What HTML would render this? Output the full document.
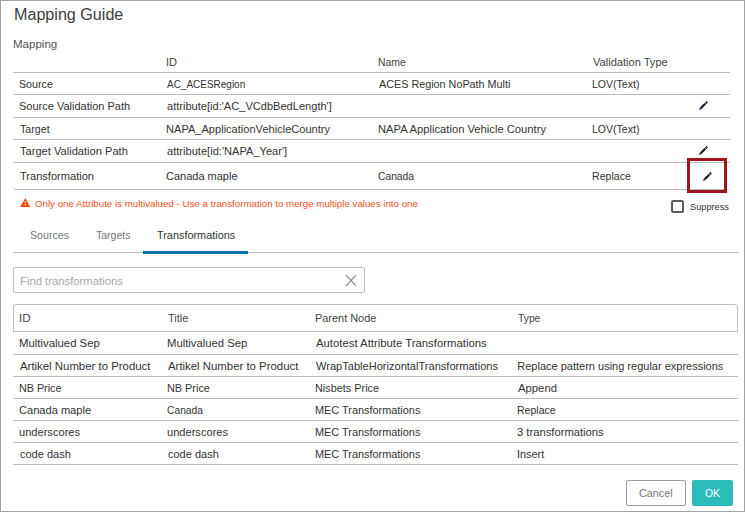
<!DOCTYPE html><html><head><meta charset="utf-8"><style>
*{margin:0;padding:0;box-sizing:border-box}
html,body{width:745px;height:512px;overflow:hidden;background:#fff}
body{position:relative;font-family:"Liberation Sans", sans-serif}
.t{position:absolute;white-space:nowrap;transform-origin:0 0}
.b{position:absolute}
.hl{position:absolute;height:1px;background:#bcbcbc}
</style></head><body>
<div class="b" style="left:0;top:0;width:745px;height:512px;border:1px solid #a3a3a3"></div>
<div class="hl" style="left:13px;top:72px;width:717px"></div>
<div class="hl" style="left:13px;top:94px;width:717px"></div>
<div class="hl" style="left:13px;top:117px;width:717px"></div>
<div class="hl" style="left:13px;top:139px;width:717px"></div>
<div class="hl" style="left:13px;top:162px;width:717px"></div>
<div class="b" style="left:13px;top:170px;width:717px;height:20px;border-bottom:1px solid #bcbcbc;border-radius:0 0 3px 3px"></div>
<div class="b" style="left:687px;top:158px;width:40px;height:35px;border:3px solid #a0151f"></div>
<svg class="b" style="left:20px;top:198px" width="11" height="10"><path d="M5.4 0 L10.2 8.9 L0 8.9 Z" fill="#fa4a0c"/><rect x="4.6" y="3.6" width="1.6" height="1.2" fill="#fff" opacity="0.85"/><rect x="4.6" y="6.0" width="1.6" height="1.2" fill="#fff" opacity="0.85"/></svg>
<div class="b" style="left:671px;top:200px;width:13px;height:13px;border:2px solid #5e5e5e;border-radius:2px"></div>
<div class="hl" style="left:13px;top:252px;width:725px;background:#bcbcbc"></div>
<div class="b" style="left:143px;top:251px;width:105px;height:3px;background:#0070b6"></div>
<div class="b" style="left:13px;top:267px;width:352px;height:26px;border:1px solid #bdbdbd;border-radius:2px"></div>
<svg class="b" style="left:345px;top:274px" width="12" height="13"><path d="M1 1 L11 12 M11 1 L1 12" stroke="#707070" stroke-width="1.1"/></svg>
<div class="b" style="left:13px;top:304px;width:725px;height:28px;border:1px solid #bcbcbc;border-radius:3px 3px 0 0"></div>
<div class="hl" style="left:13px;top:354px;width:725px"></div>
<div class="hl" style="left:13px;top:376px;width:725px"></div>
<div class="hl" style="left:13px;top:398px;width:725px"></div>
<div class="hl" style="left:13px;top:420px;width:725px"></div>
<div class="hl" style="left:13px;top:442px;width:725px"></div>
<div class="hl" style="left:13px;top:464px;width:725px"></div>
<div class="b" style="left:626px;top:480px;width:60px;height:26px;border:1px solid #9c9c9c;border-radius:2px"></div>
<div class="b" style="left:692px;top:480px;width:41px;height:26px;background:#2bbcba;border-radius:2px"></div>
<svg class="b" style="left:0;top:0" width="745" height="512"><line x1="700.5" y1="108.5" x2="705.4" y2="103.6" stroke="#10132e" stroke-width="2.1"/><path d="M699.1 109.9 L699.75 107.8 L701.2 109.25 Z" fill="#181a30"/><line x1="705.75" y1="103.25" x2="707.2" y2="101.8" stroke="#301a2c" stroke-width="2.1"/><line x1="700.5" y1="153.5" x2="705.4" y2="148.6" stroke="#10132e" stroke-width="2.1"/><path d="M699.1 154.9 L699.75 152.8 L701.2 154.25 Z" fill="#181a30"/><line x1="705.75" y1="148.25" x2="707.2" y2="146.8" stroke="#301a2c" stroke-width="2.1"/><line x1="704.5" y1="179.5" x2="709.4" y2="174.6" stroke="#10132e" stroke-width="2.1"/><path d="M703.1 180.9 L703.75 178.8 L705.2 180.25 Z" fill="#181a30"/><line x1="709.75" y1="174.25" x2="711.2" y2="172.8" stroke="#301a2c" stroke-width="2.1"/></svg>
<div class="t" style="left:14.0px;top:7px;font-size:16px;line-height:16px;color:#3d3d3d;transform:scaleX(1.0075);">Mapping Guide</div>
<div class="t" style="left:13.0px;top:39px;font-size:11px;line-height:11px;color:#555;transform:scaleX(1.0488);">Mapping</div>
<div class="t" style="left:166.0px;top:57px;font-size:11px;line-height:11px;color:#444;">ID</div>
<div class="t" style="left:377.6px;top:57px;font-size:11px;line-height:11px;color:#444;transform:scaleX(0.9464);">Name</div>
<div class="t" style="left:593.0px;top:57px;font-size:11px;line-height:11px;color:#444;transform:scaleX(1.0068);">Validation Type</div>
<div class="t" style="left:19.0px;top:79px;font-size:11px;line-height:11px;color:#333;transform:scaleX(0.9706);">Source</div>
<div class="t" style="left:167.0px;top:79px;font-size:11px;line-height:11px;color:#333;transform:scaleX(0.9070);">AC_ACESRegion</div>
<div class="t" style="left:378.5px;top:79px;font-size:11px;line-height:11px;color:#333;transform:scaleX(0.9812);">ACES Region NoPath Multi</div>
<div class="t" style="left:592.0px;top:79px;font-size:11px;line-height:11px;color:#333;transform:scaleX(0.9583);">LOV(Text)</div>
<div class="t" style="left:19.0px;top:101px;font-size:11px;line-height:11px;color:#333;">Source Validation Path</div>
<div class="t" style="left:167.0px;top:101px;font-size:11px;line-height:11px;color:#333;transform:scaleX(1.0061);">attribute[id:'AC_VCdbBedLength']</div>
<div class="t" style="left:20.0px;top:124px;font-size:11px;line-height:11px;color:#333;transform:scaleX(0.9677);">Target</div>
<div class="t" style="left:166.0px;top:124px;font-size:11px;line-height:11px;color:#333;transform:scaleX(1.0062);">NAPA_ApplicationVehicleCountry</div>
<div class="t" style="left:377.5px;top:124px;font-size:11px;line-height:11px;color:#333;transform:scaleX(1.0189);">NAPA Application Vehicle Country</div>
<div class="t" style="left:592.0px;top:124px;font-size:11px;line-height:11px;color:#333;transform:scaleX(0.9583);">LOV(Text)</div>
<div class="t" style="left:20.0px;top:146px;font-size:11px;line-height:11px;color:#333;transform:scaleX(1.0094);">Target Validation Path</div>
<div class="t" style="left:167.0px;top:146px;font-size:11px;line-height:11px;color:#333;transform:scaleX(1.0085);">attribute[id:'NAPA_Year']</div>
<div class="t" style="left:20.0px;top:171px;font-size:11px;line-height:11px;color:#333;transform:scaleX(1.0055);">Transformation</div>
<div class="t" style="left:166.0px;top:171px;font-size:11px;line-height:11px;color:#333;">Canada maple</div>
<div class="t" style="left:377.6px;top:171px;font-size:11px;line-height:11px;color:#333;transform:scaleX(0.9342);">Canada</div>
<div class="t" style="left:592.0px;top:171px;font-size:11px;line-height:11px;color:#333;transform:scaleX(0.9615);">Replace</div>
<div class="t" style="left:35.0px;top:199px;font-size:9.5px;line-height:9.5px;color:#f5501a;transform:scaleX(1.0227);">Only one Attribute is multivalued - Use a transformation to merge multiple values into one</div>
<div class="t" style="left:689.7px;top:203px;font-size:9px;line-height:9px;color:#333;transform:scaleX(1.0243);">Suppress</div>
<div class="t" style="left:29.6px;top:230px;font-size:11px;line-height:11px;color:#777;transform:scaleX(0.9667);">Sources</div>
<div class="t" style="left:95.7px;top:230px;font-size:11px;line-height:11px;color:#777;transform:scaleX(0.9528);">Targets</div>
<div class="t" style="left:156.9px;top:230px;font-size:11px;line-height:11px;color:#333;transform:scaleX(0.9886);">Transformations</div>
<div class="t" style="left:19.7px;top:276px;font-size:11px;line-height:11px;color:#aaa;transform:scaleX(1.0263);">Find transformations</div>
<div class="t" style="left:19.4px;top:313px;font-size:11px;line-height:11px;color:#444;transform:scaleX(1.0500);">ID</div>
<div class="t" style="left:168.3px;top:313px;font-size:11px;line-height:11px;color:#444;transform:scaleX(1.0050);">Title</div>
<div class="t" style="left:315.4px;top:313px;font-size:11px;line-height:11px;color:#444;transform:scaleX(0.9934);">Parent Node</div>
<div class="t" style="left:518.0px;top:313px;font-size:11px;line-height:11px;color:#444;transform:scaleX(0.9375);">Type</div>
<div class="t" style="left:19.0px;top:338px;font-size:11px;line-height:11px;color:#333;transform:scaleX(1.0325);">Multivalued Sep</div>
<div class="t" style="left:167.0px;top:338px;font-size:11px;line-height:11px;color:#333;transform:scaleX(1.0260);">Multivalued Sep</div>
<div class="t" style="left:316.0px;top:338px;font-size:11px;line-height:11px;color:#333;transform:scaleX(1.0301);">Autotest Attribute Transformations</div>
<div class="t" style="left:20.0px;top:361px;font-size:11px;line-height:11px;color:#333;transform:scaleX(1.0357);">Artikel Number to Product</div>
<div class="t" style="left:168.0px;top:361px;font-size:11px;line-height:11px;color:#333;transform:scaleX(1.0349);">Artikel Number to Product</div>
<div class="t" style="left:316.0px;top:361px;font-size:11px;line-height:11px;color:#333;transform:scaleX(1.0055);">WrapTableHorizontalTransformations</div>
<div class="t" style="left:517.3px;top:361px;font-size:11px;line-height:11px;color:#333;">Replace pattern using regular expressions</div>
<div class="t" style="left:19.0px;top:383px;font-size:11px;line-height:11px;color:#333;transform:scaleX(0.9762);">NB Price</div>
<div class="t" style="left:167.0px;top:383px;font-size:11px;line-height:11px;color:#333;transform:scaleX(0.9881);">NB Price</div>
<div class="t" style="left:315.0px;top:383px;font-size:11px;line-height:11px;color:#333;transform:scaleX(0.9891);">Nisbets Price</div>
<div class="t" style="left:518.3px;top:383px;font-size:11px;line-height:11px;color:#333;transform:scaleX(1.0270);">Append</div>
<div class="t" style="left:19.0px;top:405px;font-size:11px;line-height:11px;color:#333;transform:scaleX(1.0071);">Canada maple</div>
<div class="t" style="left:167.1px;top:405px;font-size:11px;line-height:11px;color:#333;transform:scaleX(0.9342);">Canada</div>
<div class="t" style="left:315.0px;top:405px;font-size:11px;line-height:11px;color:#333;transform:scaleX(0.9905);">MEC Transformations</div>
<div class="t" style="left:517.3px;top:405px;font-size:11px;line-height:11px;color:#333;transform:scaleX(0.9590);">Replace</div>
<div class="t" style="left:19.0px;top:427px;font-size:11px;line-height:11px;color:#333;transform:scaleX(1.0085);">underscores</div>
<div class="t" style="left:167.0px;top:427px;font-size:11px;line-height:11px;color:#333;transform:scaleX(1.0085);">underscores</div>
<div class="t" style="left:315.0px;top:427px;font-size:11px;line-height:11px;color:#333;transform:scaleX(0.9905);">MEC Transformations</div>
<div class="t" style="left:517.3px;top:427px;font-size:11px;line-height:11px;color:#333;transform:scaleX(1.0202);">3 transformations</div>
<div class="t" style="left:20.0px;top:449px;font-size:11px;line-height:11px;color:#333;">code dash</div>
<div class="t" style="left:168.0px;top:449px;font-size:11px;line-height:11px;color:#333;">code dash</div>
<div class="t" style="left:315.0px;top:449px;font-size:11px;line-height:11px;color:#333;transform:scaleX(0.9905);">MEC Transformations</div>
<div class="t" style="left:517.3px;top:449px;font-size:11px;line-height:11px;color:#333;transform:scaleX(0.9889);">Insert</div>
<div class="t" style="left:638.8px;top:488px;font-size:11px;line-height:11px;color:#777;transform:scaleX(0.9818);">Cancel</div>
<div class="t" style="left:704.9px;top:488px;font-size:11px;line-height:11px;color:#fff;transform:scaleX(0.9438);">OK</div>
</body></html>
